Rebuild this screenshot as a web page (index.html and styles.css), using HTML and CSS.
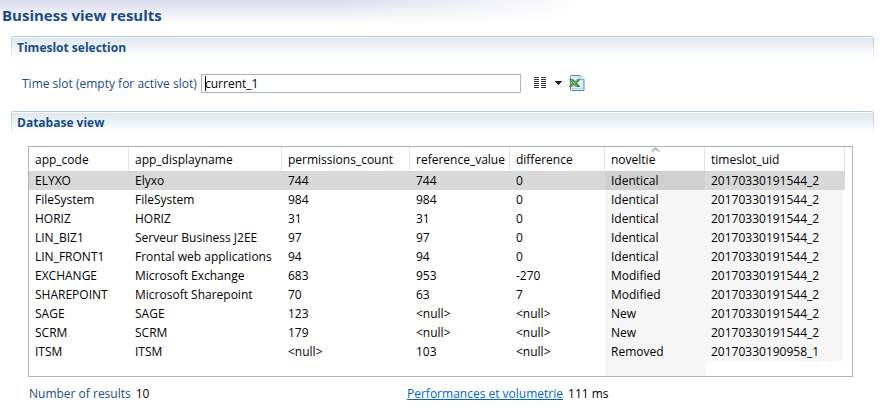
FILE: index.html
```html
<!DOCTYPE html>
<html lang="en">
<head>
<meta charset="utf-8">
<title>Business view results</title>
<link rel="stylesheet" href="styles.css">
</head>
<body>
<header class="form-heading"><h1>Business view results</h1></header>
<main>
  <section class="section">
    <h2>Timeslot selection</h2>
    <div class="slot-row">
      <label for="slot">Time slot (empty for active slot)</label>
      <input id="slot" type="text" value="current_1">
      <button type="button" class="columns-button" aria-label="Choose columns">
        <svg width="28" height="12" viewBox="0 0 28 12" shape-rendering="crispEdges">
          <path d="M0 .5h5M0 2.5h5M0 4.5h5M0 6.5h5M0 8.5h5M0 10.5h5M7 .5h5M7 2.5h5M7 4.5h5M7 6.5h5M7 8.5h5M7 10.5h5" stroke="#333"/>
          <path d="M21 4h7v1h-1v1h-1v1h-1v1h-1v-1h-1v-1h-1v-1h-1z" fill="#222"/>
        </svg>
      </button>
      <button type="button" class="export-button" aria-label="Export to Excel">
        <svg width="16" height="16" viewBox="0 0 16 16">
          <path d="M2.500.5h8.500l4 4v11h-12.500q-1 0-1-1v-13q0-1 1-1z" fill="#dcebfa" stroke="#4a86c8"/>
          <path d="M11 .5v4h4" fill="#fff" stroke="#7fb0e0"/>
          <path d="M3 13.500h10.500" stroke="#b4d2f0"/>
          <path d="M0 4h4l2 2 2.500-2h2.500v1l-3 3 3 3v1h-4l-2-2-2 2h-3v-1l3-3z" fill="#4c9140"/>
          <path d="M2 5l6 6M8.500 4.500l-6.500 7" stroke="#8dc27b"/>
        </svg>
      </button>
    </div>
  </section>
  <section class="section">
    <h2>Database view</h2>
    <div class="table-box">
      <table>
        <colgroup><col class="w100"><col class="w153"><col class="w128"><col class="w100"><col class="w95"><col class="w100"><col class="w140"></colgroup>
        <thead><tr><th>app_code</th><th>app_displayname</th><th>permissions_count</th><th>reference_value</th><th>difference</th><th class="sorted" aria-sort="ascending">noveltie<svg class="sort-mark" width="9" height="5" viewBox="0 0 9 5"><path d="M1 4.500l3.500-3.500 3.500 3.500" fill="none" stroke="#555"/></svg></th><th>timeslot_uid</th></tr></thead>
        <tbody>
          <tr class="selected"><td>ELYXO</td><td>Elyxo</td><td>744</td><td>744</td><td>0</td><td>Identical</td><td>20170330191544_2</td></tr>
          <tr><td>FileSystem</td><td>FileSystem</td><td>984</td><td>984</td><td>0</td><td>Identical</td><td>20170330191544_2</td></tr>
          <tr><td>HORIZ</td><td>HORIZ</td><td>31</td><td>31</td><td>0</td><td>Identical</td><td>20170330191544_2</td></tr>
          <tr><td>LIN_BIZ1</td><td>Serveur Business J2EE</td><td>97</td><td>97</td><td>0</td><td>Identical</td><td>20170330191544_2</td></tr>
          <tr><td>LIN_FRONT1</td><td>Frontal web applications</td><td>94</td><td>94</td><td>0</td><td>Identical</td><td>20170330191544_2</td></tr>
          <tr><td>EXCHANGE</td><td>Microsoft Exchange</td><td>683</td><td>953</td><td>-270</td><td>Modified</td><td>20170330191544_2</td></tr>
          <tr><td>SHAREPOINT</td><td>Microsoft Sharepoint</td><td>70</td><td>63</td><td>7</td><td>Modified</td><td>20170330191544_2</td></tr>
          <tr><td>SAGE</td><td>SAGE</td><td>123</td><td>&lt;null&gt;</td><td>&lt;null&gt;</td><td>New</td><td>20170330191544_2</td></tr>
          <tr><td>SCRM</td><td>SCRM</td><td>179</td><td>&lt;null&gt;</td><td>&lt;null&gt;</td><td>New</td><td>20170330191544_2</td></tr>
          <tr><td>ITSM</td><td>ITSM</td><td>&lt;null&gt;</td><td>103</td><td>&lt;null&gt;</td><td>Removed</td><td>20170330190958_1</td></tr>
        </tbody>
      </table>
    </div>
    <footer class="status">
      <p><span class="caption">Number of results</span> <span>10</span></p>
      <p><a href="#performance">Performances et volumetrie</a> <span>111 ms</span></p>
    </footer>
  </section>
</main>
</body>
</html>
```
FILE: styles.css
```css
* { box-sizing: border-box; }
body {
  margin: 0;
  background: #fff;
  color: #000;
  font: 12px/19px "Open Sans", "Noto Sans", sans-serif;
}
h1, h2, p { margin: 0; color: #1a4c82; }
.form-heading {
  height: 36px;
  padding: 5px 2px;
  background:
    linear-gradient(to bottom, transparent, #fff 24px),
    linear-gradient(to right, #d8dbed 38%, #fff 66%);
}
h1 { font-size: 15px; line-height: 21px; }
main { padding: 0 9px 0 11px; }
.section h2 {
  position: relative;
  height: 25px;
  padding: 0 6px;
  border-top: 1px solid #b0c8e0;
  border-radius: 3px 3px 0 0;
  background: linear-gradient(#fff 1px, #dfe8f1 1px, #fff 21px);
  font-size: 12px;
  line-height: 21px;
}
.section h2::before, .section h2::after {
  content: "";
  position: absolute;
  top: 1px;
  bottom: 0;
  width: 1px;
  background: linear-gradient(#b0c8e0, #fff);
}
.section h2::before { left: 0; }
.section h2::after { right: 0; }
.slot-row {
  display: flex;
  align-items: center;
  height: 50px;
  padding: 0 0 6px 11px;
}
.slot-row label { width: 179px; color: #1a4c82; white-space: nowrap; }
.slot-row input {
  flex: 0 1 320px;
  min-width: 80px;
  height: 19px;
  padding: 0 3px;
  border: 1px solid #abb5c1;
  outline: 0;
  /* text caret at the start of the field */
  background: linear-gradient(#000, #000) 3px 1px / 1px 15px no-repeat #fff;
  color: #000;
  font: inherit;
}
.slot-row button { display: flex; padding: 0; border: 0; background: none; }
.columns-button { margin: 0 7px 0 13px; }
.table-box {
  height: 231px;
  margin: 10px 21px 0 17px;
  overflow: hidden;
  border: 1px solid #abb5c1;
  background: linear-gradient(to right, transparent 576px, #f6f6f6 576px, #f6f6f6 676px, transparent 676px) 0 24px no-repeat;
}
table { width: 816px; table-layout: fixed; border-collapse: separate; border-spacing: 0; }
.w95 { width: 95px; }
.w100 { width: 100px; }
.w128 { width: 128px; }
.w140 { width: 140px; }
.w153 { width: 153px; }
th, td { padding: 0 0 0 6px; text-align: left; white-space: nowrap; }
th { height: 24px; border-right: 1px solid #e2e2e2; background: #fff; font-weight: normal; }
td { height: 19px; }
td:nth-child(n+6) { background: #f6f6f6; }
td:last-child { border-right: 2px solid #fff; }
.selected td { background: #d8d8d8; }
.selected td:last-child { border-color: #d8d8d8; }
.selected td:nth-child(6) { background: #d0d0d0; }
.sorted { position: relative; }
.sort-mark { position: absolute; top: 0; left: 46px; }
.status { display: grid; grid-template-columns: 378px 1fr; padding: 7px 18px; }
.status p { display: flex; gap: 5px; color: #000; }
.caption { color: #1a4c82; }
a { color: #0066cc; }
```
